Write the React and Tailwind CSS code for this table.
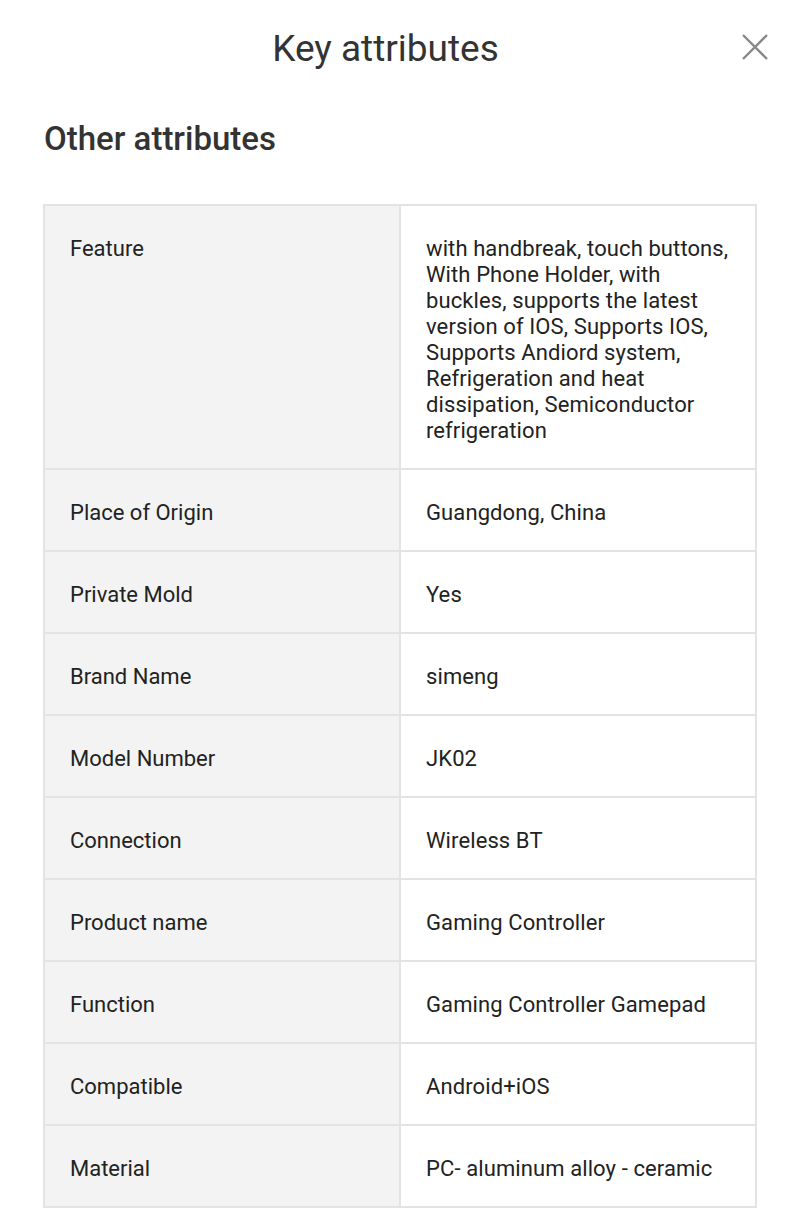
import React from 'react';

const attributes = [
  {
    name: 'Feature',
    value:
      'with handbreak, touch buttons, With Phone Holder, with buckles, supports the latest version of IOS, Supports IOS, Supports Andiord system, Refrigeration and heat dissipation, Semiconductor refrigeration',
  },
  { name: 'Place of Origin', value: 'Guangdong, China' },
  { name: 'Private Mold', value: 'Yes' },
  { name: 'Brand Name', value: 'simeng' },
  { name: 'Model Number', value: 'JK02' },
  { name: 'Connection', value: 'Wireless BT' },
  { name: 'Product name', value: 'Gaming Controller' },
  { name: 'Function', value: 'Gaming Controller Gamepad' },
  { name: 'Compatible', value: 'Android+iOS' },
  { name: 'Material', value: 'PC- aluminum alloy - ceramic' },
];

const App = () => {
  return (
    <div className="min-h-screen bg-white font-['Roboto',sans-serif] text-[#222]">
      {/* Header */}
      <div className="flex items-center h-[98px]">
        <h1 className="flex-1 text-center pl-[30px] text-[37px] text-[#333] font-normal">
          Key attributes
        </h1>
        <button className="w-[28px] h-[28px] mr-[31px] mb-[4px] text-[#888]">
          <svg viewBox="0 0 28 28" className="w-[28px] h-[28px]" fill="none" stroke="currentColor" strokeWidth="2.4">
            <path d="M2 2L26 26M26 2L2 26" />
          </svg>
        </button>
      </div>

      {/* Other attributes */}
      <div className="px-[44px] pt-[21px]">
        <h2 className="text-[33px] font-medium text-[#333] leading-[40px]">Other attributes</h2>
      </div>

      <div className="px-[43px] pt-[45px]">
        <table className="w-full border-collapse table-fixed">
          <tbody>
            {attributes.map((attr) => (
              <tr key={attr.name}>
                <td className="w-[356px] align-top bg-[#f3f3f3] border-2 border-[#e3e3e3] px-[25px] pt-[30px] pb-[24px] text-[22px] leading-[26px]">
                  {attr.name}
                </td>
                <td className="align-top border-2 border-[#e3e3e3] pl-[25px] pr-[18px] pt-[30px] pb-[24px] text-[22px] leading-[26px] tracking-[0.1px]">
                  {attr.value}
                </td>
              </tr>
            ))}
          </tbody>
        </table>
      </div>
    </div>
  );
};

export default App;
